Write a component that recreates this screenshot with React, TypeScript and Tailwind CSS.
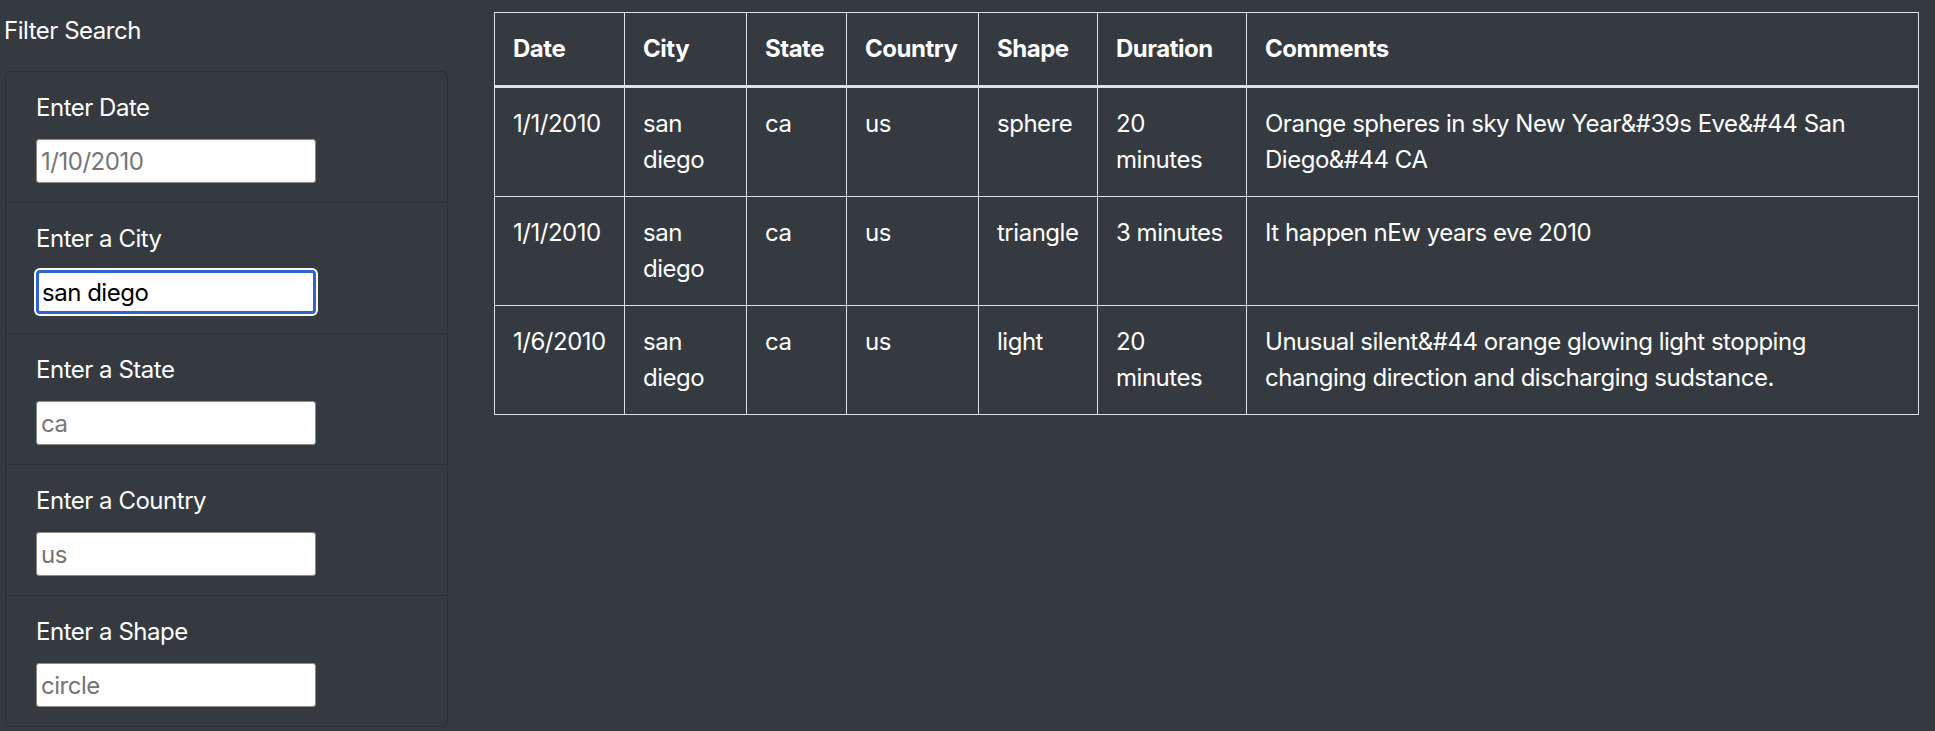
import React from "react";

const sightings = [
  {
    date: "1/1/2010",
    city: "san diego",
    state: "ca",
    country: "us",
    shape: "sphere",
    duration: "20 minutes",
    comments: "Orange spheres in sky New Year&#39s Eve&#44 San Diego&#44 CA",
  },
  {
    date: "1/1/2010",
    city: "san diego",
    state: "ca",
    country: "us",
    shape: "triangle",
    duration: "3 minutes",
    comments: "It happen nEw years eve 2010",
  },
  {
    date: "1/6/2010",
    city: "san diego",
    state: "ca",
    country: "us",
    shape: "light",
    duration: "20 minutes",
    comments: "Unusual silent&#44 orange glowing light stopping changing direction and discharging sudstance.",
  },
];

const filters = [
  { label: "Enter Date", placeholder: "1/10/2010", value: "" },
  { label: "Enter a City", placeholder: "", value: "san diego", focused: true },
  { label: "Enter a State", placeholder: "ca", value: "" },
  { label: "Enter a Country", placeholder: "us", value: "" },
  { label: "Enter a Shape", placeholder: "circle", value: "" },
];

const columns = [
  { name: "Date", w: "w-[130px]" },
  { name: "City", w: "w-[122px]" },
  { name: "State", w: "w-[100px]" },
  { name: "Country", w: "w-[132px]" },
  { name: "Shape", w: "w-[119px]" },
  { name: "Duration", w: "w-[149px]" },
  { name: "Comments", w: "w-[672px]" },
];

export default function App() {
  return (
    <div className="flex min-h-[731px] w-full bg-[#343a40] font-['Inter','Noto_Sans',sans-serif] text-[24px] leading-[36px] tracking-[-0.02em] text-white">
      {/* Filter sidebar */}
      <aside className="w-[448px] shrink-0 pl-1 pt-[13px]">
        <h5 className="mb-[22px]">Filter Search</h5>
        <ul className="ml-px flex flex-col rounded-md border border-[#2b3035]">
          {filters.map((f, i) => (
            <li
              key={f.label}
              className={`flex flex-col px-[30px] pb-[19px] pt-[18px] ${i > 0 ? "border-t border-[#2b3035]" : ""}`}
            >
              <label className="mb-[13px]">{f.label}</label>
              <input
                type="text"
                readOnly
                defaultValue={f.value}
                placeholder={f.placeholder}
                className={
                  f.focused
                    ? "h-[44px] w-[280px] rounded-[4px] border-[3px] border-[#2c63d3] bg-white px-[3px] text-[24px] tracking-[-0.02em] text-black shadow-[0_0_0_2px_#ffffff] outline-none"
                    : "h-[44px] w-[280px] rounded-[3px] border border-[#8a8a8a] bg-white px-[4px] text-[24px] tracking-[-0.02em] text-black outline-none placeholder:text-[#757575]"
                }
              />
            </li>
          ))}
        </ul>
      </aside>

      {/* Results table */}
      <main className="pl-[46px] pt-[12px]">
        <table className="w-[1424px] table-fixed border-collapse border border-[#dee2e6] text-left">
          <thead>
            <tr>
              {columns.map((c) => (
                <th
                  key={c.name}
                  className={`${c.w} border border-b-[3px] border-[#dee2e6] px-[18px] py-[18px] align-top font-bold`}
                >
                  {c.name}
                </th>
              ))}
            </tr>
          </thead>
          <tbody>
            {sightings.map((s, i) => (
              <tr key={i}>
                <td className="border border-[#dee2e6] p-[18px] align-top">{s.date}</td>
                <td className="border border-[#dee2e6] p-[18px] align-top">{s.city}</td>
                <td className="border border-[#dee2e6] p-[18px] align-top">{s.state}</td>
                <td className="border border-[#dee2e6] p-[18px] align-top">{s.country}</td>
                <td className="border border-[#dee2e6] p-[18px] align-top">{s.shape}</td>
                <td className="border border-[#dee2e6] p-[18px] align-top">{s.duration}</td>
                <td className="border border-[#dee2e6] p-[18px] align-top">{s.comments}</td>
              </tr>
            ))}
          </tbody>
        </table>
      </main>
    </div>
  );
}
